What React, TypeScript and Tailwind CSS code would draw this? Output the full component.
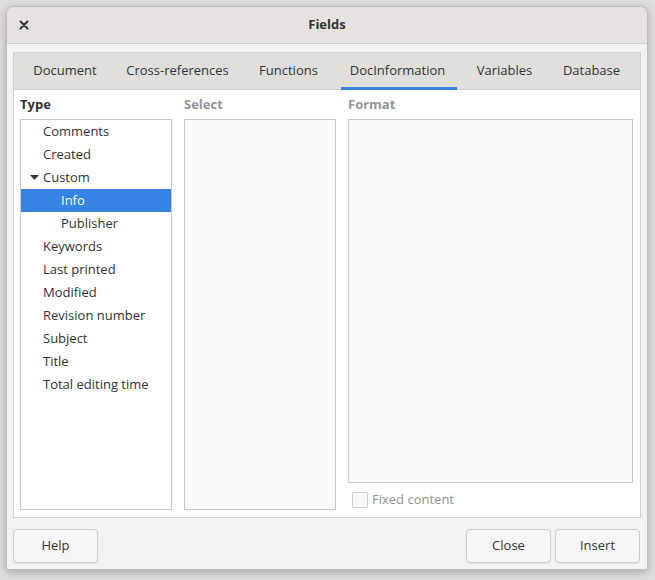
const tabs = [
  { label: "Document", w: "w-[94px]" },
  { label: "Cross-references", w: "w-[131px]" },
  { label: "Functions", w: "w-[91px]" },
  { label: "DocInformation", w: "w-[127px]" },
  { label: "Variables", w: "w-[87px]" },
  { label: "Database", w: "w-[87px]" },
];

type Item = { label: string; level: number; expanded?: boolean; selected?: boolean };

const items: Item[] = [
  { label: "Comments", level: 0 },
  { label: "Created", level: 0 },
  { label: "Custom", level: 0, expanded: true },
  { label: "Info", level: 1, selected: true },
  { label: "Publisher", level: 1 },
  { label: "Keywords", level: 0 },
  { label: "Last printed", level: 0 },
  { label: "Modified", level: 0 },
  { label: "Revision number", level: 0 },
  { label: "Subject", level: 0 },
  { label: "Title", level: 0 },
  { label: "Total editing time", level: 0 },
];

const font = { fontFamily: '"Open Sans", "Noto Sans", sans-serif' };

const btn =
  "w-[85px] h-[34px] border border-[#cdcdcd] rounded-[4px] bg-[#f6f6f6] shadow-[0_1px_0_rgba(0,0,0,0.06)] text-[#2e3436]";

const App = () => {
  return (
    <div className="w-[655px] h-[580px] bg-[#dedede] pt-[6px] pl-[6px] overflow-hidden text-[13px] text-[#2e3436]" style={font}>
      <div className="w-[642px] h-[564px] bg-[#f2f2f2] rounded-t-[8px] border border-[#bdbdbd] shadow-[0_2px_8px_rgba(0,0,0,0.25)] flex flex-col overflow-hidden">
        {/* title bar */}
        <div className="h-[37px] bg-[#e6e2df] border-b border-[#d0ccc8] flex items-center shrink-0">
          <button className="w-[30px] h-[30px] ml-[2px] flex items-center justify-center">
            <svg width="10" height="10" viewBox="0 0 10 10">
              <path d="M1.5 1.5 L8.5 8.5 M8.5 1.5 L1.5 8.5" stroke="#2e3436" strokeWidth="2" strokeLinecap="round" />
            </svg>
          </button>
          <div className="flex-1 text-center font-bold pr-[32px]">Fields</div>
        </div>

        {/* tab frame */}
        <div className="mt-[8px] mx-[6px] h-[466px] border border-[#cfcfcf] bg-white flex flex-col">
          <div className="h-[37px] bg-[#e1dfdc] border-b border-[#d6d3cf] flex items-stretch pl-[4px] shrink-0">
            {tabs.map((t) => (
              <div key={t.label} className={t.w + " flex items-center justify-center whitespace-nowrap relative"}>
                {t.label}
                {t.label === "DocInformation" && (
                  <div className="absolute left-[7px] right-[4px] bottom-[-1px] h-[3px] bg-[#3584e4]" />
                )}
              </div>
            ))}
          </div>

          <div className="flex-1 flex gap-[12px] px-[6px] pb-[7px]">
            {/* Type */}
            <div className="w-[152px] flex flex-col">
              <div className="h-[29px] flex items-center font-bold">Type</div>
              <div className="flex-1 border border-[#c8c8c8] bg-white">
                {items.map((it) => (
                  <div
                    key={it.label}
                    className={"h-[23px] flex items-center " + (it.selected ? "bg-[#3584e4] text-white" : "")}
                  >
                    <div
                      className={
                        it.level === 1
                          ? "w-[40px] shrink-0"
                          : "w-[22px] shrink-0 flex items-center justify-center pl-[4px]"
                      }
                    >
                      {it.expanded && (
                        <svg width="9" height="6" viewBox="0 0 9 6">
                          <path d="M0 0 L9 0 L4.5 5 Z" fill="#2e3436" />
                        </svg>
                      )}
                    </div>
                    <span>{it.label}</span>
                  </div>
                ))}
              </div>
            </div>

            {/* Select */}
            <div className="w-[152px] flex flex-col">
              <div className="h-[29px] flex items-center font-bold text-[#929595]">Select</div>
              <div className="flex-1 border border-[#c8c8c8] bg-[#fafafa]" />
            </div>

            {/* Format */}
            <div className="w-[285px] flex flex-col">
              <div className="h-[29px] flex items-center font-bold text-[#929595]">Format</div>
              <div className="flex-1 border border-[#c8c8c8] bg-[#fafafa]" />
              <div className="h-[27px] pt-[6px] flex items-center gap-[4px] pl-[4px] text-[#929595]">
                <div className="w-[16px] h-[16px] border border-[#cdcdcd] rounded-[2px] bg-[#f8f8f8]" />
                <span>Fixed content</span>
              </div>
            </div>
          </div>
        </div>

        {/* buttons */}
        <div className="flex items-center mt-[11px] ml-[6px] mr-[7px]">
          <button className={btn}>Help</button>
          <div className="flex-1" />
          <button className={btn}>Close</button>
          <button className={btn + " ml-[4px]"}>Insert</button>
        </div>
      </div>
    </div>
  );
};

export default App;
